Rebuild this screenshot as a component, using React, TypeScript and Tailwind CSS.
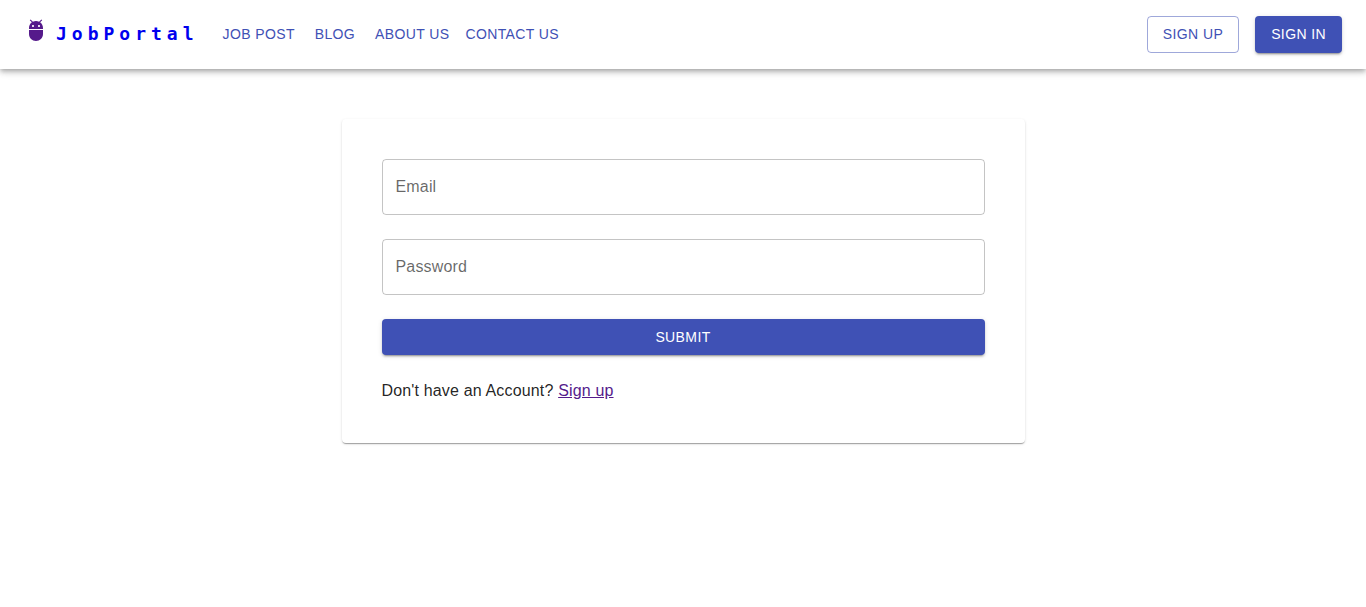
import React from 'react';

const navItems = ['Job Post', 'Blog', 'About Us', 'Contact Us'];

const raised =
  'bg-[#3f51b5] text-white shadow-[0_3px_1px_-2px_rgba(0,0,0,0.2),0_2px_2px_rgba(0,0,0,0.14),0_1px_5px_rgba(0,0,0,0.12)] hover:bg-[#303f9f]';

function AndroidIcon() {
  return (
    <svg viewBox="0 0 24 24" className="size-6" fill="currentColor" aria-hidden="true">
      <path d="M5 16c0 3.87 3.13 7 7 7s7-3.13 7-7v-4H5v4zM16.12 4.37l2.1-2.1-.82-.83-2.3 2.31C14.16 3.28 13.12 3 12 3s-2.16.28-3.09.75L6.6 1.44l-.82.83 2.1 2.1C6.14 5.64 5 7.68 5 10v1h14v-1c0-2.32-1.14-4.36-2.88-5.63zM9 9c-.55 0-1-.45-1-1s.45-1 1-1 1 .45 1 1-.45 1-1 1zm6 0c-.55 0-1-.45-1-1s.45-1 1-1 1 .45 1 1-.45 1-1 1z" />
    </svg>
  );
}

function Header() {
  return (
    <header className="flex items-center bg-white px-6 py-4 shadow-[0_2px_4px_-1px_rgba(0,0,0,0.2),0_4px_5px_rgba(0,0,0,0.14),0_1px_10px_rgba(0,0,0,0.12)]">
      <a href="#home" aria-label="Home" className="mr-2 pb-2.5 text-[#551a8b]">
        <AndroidIcon />
      </a>
      <a
        href="#home"
        className="mr-4 pb-0.5 font-['DejaVu_Sans_Mono',monospace] text-lg leading-8 font-bold tracking-[5px] text-[#0000ee]"
      >
        JobPortal
      </a>
      <nav className="flex grow">
        {navItems.map((item) => (
          <a
            key={item}
            href={'#' + item.toLowerCase().replace(' ', '-')}
            className="min-w-16 rounded px-2 pt-1 pb-1.5 text-center text-sm leading-6 tracking-[0.028em] text-[#3f51b5] uppercase"
          >
            {item}
          </a>
        ))}
      </nav>
      <div className="flex gap-4 text-sm leading-6 tracking-[0.028em]">
        <button
          type="button"
          className="h-[37px] rounded border border-[#3f51b5]/50 px-[15px] pb-0.5 text-[#3f51b5] uppercase"
        >
          Sign up
        </button>
        <button type="button" className={'h-[37px] rounded px-4 pb-0.5 uppercase ' + raised}>
          Sign in
        </button>
      </div>
    </header>
  );
}

function Field({ label, type }: { label: string; type: string }) {
  return (
    <input
      type={type}
      aria-label={label}
      placeholder={label}
      className="h-14 w-full rounded border border-black/23 px-[13px] text-base tracking-[0.01em] text-black/87 placeholder:text-black/60 focus:border-[#3f51b5] focus:outline-none"
    />
  );
}

export default function App() {
  return (
    <div className="min-h-screen bg-white font-['Liberation_Sans',Arial,sans-serif]">
      <Header />
      <main className="pt-[50px]">
        <form
          onSubmit={(e: React.FormEvent) => e.preventDefault()}
          className="mx-auto flex w-1/2 flex-col gap-6 rounded bg-white p-10 shadow-[0_2px_1px_-1px_rgba(0,0,0,0.2),0_1px_1px_rgba(0,0,0,0.14),0_1px_3px_rgba(0,0,0,0.12)]"
        >
          <Field label="Email" type="email" />
          <Field label="Password" type="password" />
          <button
            type="submit"
            className={'rounded px-4 py-1.5 text-sm leading-6 tracking-[0.028em] uppercase ' + raised}
          >
            Submit
          </button>
          <p className="text-base leading-6 tracking-[0.01em] text-black/87">
            Don't have an Account?{' '}
            <a href="#signup" className="text-[#551a8b] underline">
              Sign up
            </a>
          </p>
        </form>
      </main>
    </div>
  );
}
